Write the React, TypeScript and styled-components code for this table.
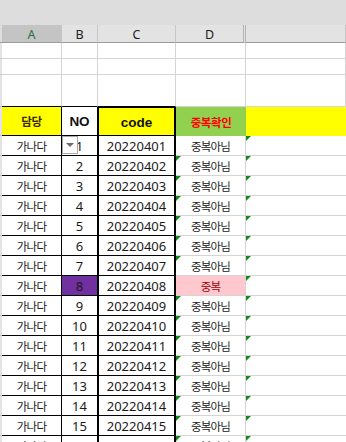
import * as React from 'react';
import styled, { createGlobalStyle } from 'styled-components';

const GlobalStyle = createGlobalStyle`
    html, body {
        margin: 0;
        padding: 0;
        background: #ffffff;
        overflow: hidden;
    }
    body {
        font-family: 'Noto Sans', 'Noto Sans CJK KR', sans-serif;
    }
`;

const GRID = '#d4d4d4';
const INK = '#000000';

const Sheet = styled.div`
    width: 346px;
    height: 442px;
    overflow: hidden;
    display: flex;
    flex-direction: column;
`;

const TopBar = styled.div`
    height: 25px;
    flex: none;
    background: #dddddd;
`;

const Row = styled.div<{ $h: number }>`
    display: flex;
    flex: none;
    height: ${(p) => p.$h}px;
`;

const Gutter = styled.div<{ $head?: boolean }>`
    width: 2px;
    flex: none;
    box-sizing: border-box;
    background: ${(p) => (p.$head ? '#dddddd' : '#e3e3e3')};
    border-bottom: 1px solid ${(p) => (p.$head ? '#9b9b9b' : '#c6c6c6')};
`;

const ColHead = styled.div<{ $w: number; $sel?: boolean; $split?: boolean }>`
    width: ${(p) => p.$w}px;
    flex: ${(p) => (p.$w ? 'none' : '1')};
    box-sizing: border-box;
    display: flex;
    align-items: center;
    justify-content: center;
    background: ${(p) => (p.$sel ? '#c4c4c4' : '#e3e3e3')};
    color: ${(p) => (p.$sel ? '#217346' : '#222222')};
    border-right: ${(p) => (p.$split ? '3px double #b4b4b4' : '1px solid #c6c6c6')};
    border-bottom: 1px solid #9b9b9b;
    font-family: 'Noto Sans', sans-serif;
    font-size: 12.5px;
    padding-top: 1px;
`;

interface ICell {
    $w: number;
    $bg?: string;
    $right?: string;
    $left?: string;
    $bottom?: string;
    $top?: string;
}

const Cell = styled.div<ICell>`
    position: relative;
    width: ${(p) => p.$w}px;
    flex: ${(p) => (p.$w ? 'none' : '1')};
    box-sizing: border-box;
    display: flex;
    align-items: center;
    justify-content: center;
    background: ${(p) => p.$bg || '#ffffff'};
    border-right: ${(p) => p.$right || `1px solid ${GRID}`};
    border-bottom: ${(p) => p.$bottom || `1px solid ${GRID}`};
    ${(p) => (p.$left ? `border-left: ${p.$left};` : '')}
    ${(p) => (p.$top ? `border-top: ${p.$top};` : '')}
    white-space: nowrap;
`;

const Flag = styled.span`
    position: absolute;
    top: 0;
    left: 0;
    width: 0;
    height: 0;
    border-top: 5px solid #12891a;
    border-right: 5px solid transparent;
`;

const Num = styled.span`
    font-family: 'Noto Sans', sans-serif;
    font-size: 13px;
    color: #1a1a1a;
    padding-top: 1px;
`;

const Kor = styled.span<{ $color?: string }>`
    font-family: 'Noto Sans CJK KR', sans-serif;
    font-size: 11.5px;
    letter-spacing: -0.8px;
    color: ${(p) => p.$color || '#222222'};
`;

const HeadKor = styled.span<{ $color: string }>`
    font-family: 'Noto Sans CJK KR', sans-serif;
    font-weight: 700;
    font-size: 11.5px;
    letter-spacing: -0.4px;
    color: ${(p) => p.$color};
`;

const HeadLatin = styled.span`
    font-family: 'Liberation Sans', sans-serif;
    font-weight: 700;
    font-size: 13.5px;
    color: #111111;
    padding-top: 1px;
`;

const Dropdown = styled.div`
    position: absolute;
    left: 0;
    top: 0;
    width: 16px;
    height: 18px;
    box-sizing: border-box;
    border: 1px solid #ababab;
    background: #ffffff;
    display: flex;
    align-items: center;
    justify-content: center;
`;

const Arrow = styled.span`
    width: 0;
    height: 0;
    border-left: 4px solid transparent;
    border-right: 4px solid transparent;
    border-top: 4px solid #6a6a6a;
`;

const W = { a: 60, b: 36, c: 78, d: 70 };
const BLACK = `1px solid ${INK}`;
const THICK = `2px solid ${INK}`;

const DUP_NO = 8;

const App: React.FC = (): JSX.Element => {
    const rows = Array.from({ length: 16 }, (_, i) => i + 1);

    return (
        <>
            <GlobalStyle />
            <Sheet>
                <TopBar />
                <Row $h={18}>
                    <Gutter $head />
                    <ColHead $w={W.a} $sel>A</ColHead>
                    <ColHead $w={W.b}>B</ColHead>
                    <ColHead $w={W.c}>C</ColHead>
                    <ColHead $w={W.d} $split>D</ColHead>
                    <ColHead $w={0} />
                </Row>

                {[16, 16, 32].map((h, i) => (
                    <Row $h={h} key={'blank' + i}>
                        <Gutter />
                        <Cell $w={W.a} $bottom={i === 2 ? BLACK : undefined} />
                        <Cell $w={W.b} $bottom={i === 2 ? BLACK : undefined} />
                        <Cell $w={W.c} $bottom={i === 2 ? BLACK : undefined} />
                        <Cell $w={W.d} />
                        <Cell $w={0} />
                    </Row>
                ))}

                <Row $h={29}>
                    <Gutter />
                    <Cell $w={W.a} $bg="#ffff00" $right={BLACK} $bottom={BLACK}>
                        <HeadKor $color="#3b2a00">담당</HeadKor>
                    </Cell>
                    <Cell $w={W.b - 1} $right="none" $bottom={BLACK}>
                        <HeadLatin>NO</HeadLatin>
                    </Cell>
                    <Cell $w={W.c + 1} $bg="#ffff00" $left={THICK} $right={THICK} $top={BLACK} $bottom={BLACK}>
                        <HeadLatin>code</HeadLatin>
                    </Cell>
                    <Cell $w={W.d} $bg="#92d050" $right="none" $bottom="none">
                        <HeadKor $color="#ff0000">중복확인</HeadKor>
                    </Cell>
                    <Cell $w={0} $bg="#ffff00" $right="none" $bottom="none" />
                </Row>

                {rows.map((n) => {
                    const dup = n === DUP_NO;
                    const code = `202204${String(n).padStart(2, '0')}`;
                    return (
                        <Row $h={20} key={n}>
                            <Gutter />
                            <Cell $w={W.a} $right={BLACK} $bottom={BLACK}>
                                <Kor>가나다</Kor>
                            </Cell>
                            <Cell $w={W.b - 1} $right="none" $bottom={BLACK} $bg={dup ? '#7030a0' : undefined}>
                                <Num>{n}</Num>
                                {n === 1 && (
                                    <Dropdown>
                                        <Arrow />
                                    </Dropdown>
                                )}
                            </Cell>
                            <Cell $w={W.c + 1} $left={THICK} $right={THICK} $bottom={BLACK}>
                                <Num>{code}</Num>
                            </Cell>
                            <Cell $w={W.d} $bg={dup ? '#ffc7ce' : undefined}>
                                {n > 1 && !dup && <Flag />}
                                {dup ? <Kor $color="#9c0006">중복</Kor> : <Kor>중복아님</Kor>}
                            </Cell>
                            <Cell $w={0} $right="none">
                                <Flag />
                            </Cell>
                        </Row>
                    );
                })}
            </Sheet>
        </>
    );
};

export default App;
